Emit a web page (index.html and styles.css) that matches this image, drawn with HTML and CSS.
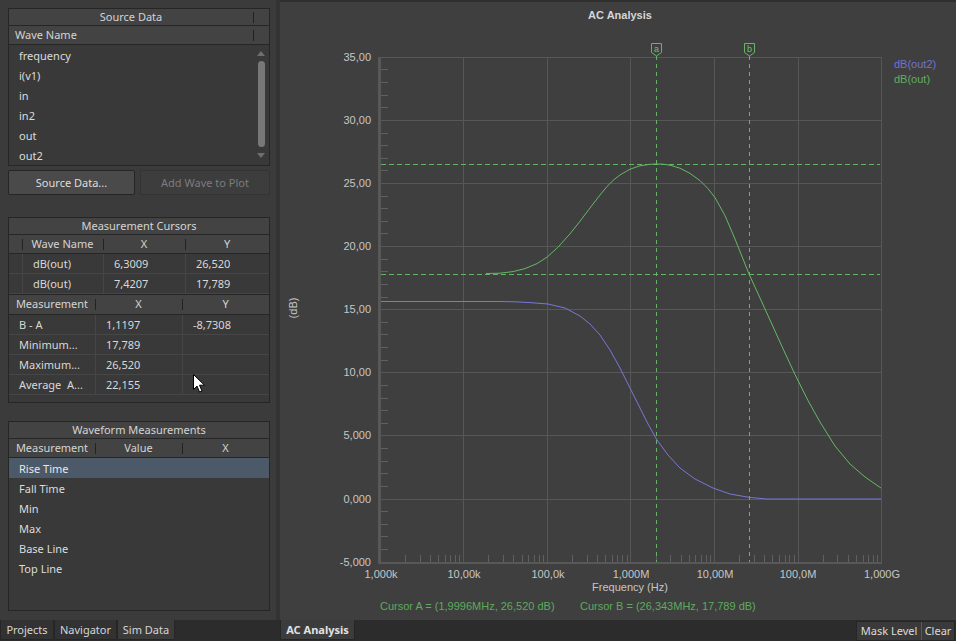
FILE: index.html
```html
<!DOCTYPE html>
<html>
<head>
<meta charset="utf-8">
<title>AC Analysis</title>
<link rel="stylesheet" href="styles.css">
</head>
<body>
<div class="app">
  <div class="main">
    <aside class="side">
      <section class="tbl src">
        <div class="hdr cols-src srctitle"><div class="hc">Source Data</div><div class="hc sep"></div></div>
        <div class="hdr cols-src"><div class="hc left">Wave Name</div><div class="hc sep"></div></div>
        <div class="src-body">
          <ul class="list">
            <li>frequency</li>
            <li>i(v1)</li>
            <li>in</li>
            <li>in2</li>
            <li>out</li>
            <li>out2</li>
          </ul>
          <div class="scroll">
            <span class="arr up"></span>
            <span class="thumb"></span>
            <span class="arr down"></span>
          </div>
        </div>
      </section>

      <div class="btns">
        <button class="btn b1">Source Data...</button>
        <button class="btn b2 dis">Add Wave to Plot</button>
      </div>

      <section class="tbl mc">
        <div class="ttl">Measurement Cursors</div>
        <div class="hdr cols-a"><div class="hc"></div><div class="hc sep">Wave Name</div><div class="hc sep">X</div><div class="hc sep">Y</div></div>
        <div class="row cols-a"><div class="c"></div><div class="c">dB(out)</div><div class="c">6,3009</div><div class="c">26,520</div></div>
        <div class="row cols-a"><div class="c"></div><div class="c">dB(out)</div><div class="c">7,4207</div><div class="c">17,789</div></div>
        <div class="hdr cols-b sec"><div class="hc">Measurement</div><div class="hc sep">X</div><div class="hc sep">Y</div></div>
        <div class="row cols-b"><div class="c">B - A</div><div class="c">1,1197</div><div class="c">-8,7308</div></div>
        <div class="row cols-b"><div class="c">Minimum...</div><div class="c">17,789</div><div class="c"></div></div>
        <div class="row cols-b"><div class="c">Maximum...</div><div class="c">26,520</div><div class="c"></div></div>
        <div class="row cols-b"><div class="c">Average&nbsp; A...</div><div class="c">22,155</div><div class="c"></div></div>
        <div class="fill mcfill"></div>
      </section>

      <section class="tbl wm">
        <div class="ttl">Waveform Measurements</div>
        <div class="hdr cols-b"><div class="hc">Measurement</div><div class="hc sep">Value</div><div class="hc sep">X</div></div>
        <div class="wrow sel">Rise Time</div>
        <div class="wrow">Fall Time</div>
        <div class="wrow">Min</div>
        <div class="wrow">Max</div>
        <div class="wrow">Base Line</div>
        <div class="wrow">Top Line</div>
      </section>

      <svg class="pointer" width="13" height="20" viewBox="0 0 13 20">
        <path d="M0.5 0.5 L0.5 15.5 L4 12 L6.5 18 L9 17 L6.5 11.2 L11.5 11.2 Z" fill="#ffffff" stroke="#000000" stroke-width="1" stroke-linejoin="miter"/>
      </svg>
    </aside>

    <div class="split"></div>

    <main class="chart">
      <svg class="plot" width="676" height="618" viewBox="280 2 676 618">
        <text class="title" x="620" y="19" text-anchor="middle">AC Analysis</text>

        <!-- grid -->
        <path class="grid" d="M380 57.5H881.5M380 120.5H881.5M380 183.5H881.5M380 246.5H881.5M380 309.5H881.5M380 372.5H881.5M380 435.5H881.5M380 499.5H881.5M463.5 57V562M547.5 57V562M630.5 57V562M714.5 57V562M798.5 57V562M881.5 57V562"/>

        <!-- minor y ticks -->
        <path class="tick" d="M381 69.5h7M381 82.5h7M381 95.5h7M381 107.5h7M381 133.5h7M381 145.5h7M381 158.5h7M381 170.5h7M381 196.5h7M381 208.5h7M381 221.5h7M381 233.5h7M381 259.5h7M381 271.5h7M381 284.5h7M381 297.5h7M381 322.5h7M381 334.5h7M381 347.5h7M381 360.5h7M381 385.5h7M381 398.5h7M381 410.5h7M381 423.5h7M381 448.5h7M381 461.5h7M381 473.5h7M381 486.5h7M381 511.5h7M381 524.5h7M381 536.5h7M381 549.5h7"/>

        <!-- minor x ticks -->
        <path class="tick" d="M405.5 555v7M420.5 555v7M430.5 555v7M438.5 555v7M445.5 555v7M450.5 555v7M455.5 555v7M459.5 555v7M488.5 555v7M503.5 555v7M513.5 555v7M522.5 555v7M528.5 555v7M534.5 555v7M539.5 555v7M543.5 555v7M572.5 555v7M587.5 555v7M597.5 555v7M605.5 555v7M612.5 555v7M617.5 555v7M622.5 555v7M627.5 555v7M656.5 555v7M670.5 555v7M681.5 555v7M689.5 555v7M695.5 555v7M701.5 555v7M706.5 555v7M710.5 555v7M739.5 555v7M754.5 555v7M764.5 555v7M772.5 555v7M779.5 555v7M785.5 555v7M789.5 555v7M794.5 555v7M823.5 555v7M837.5 555v7M848.5 555v7M856.5 555v7M863.5 555v7M868.5 555v7M873.5 555v7M877.5 555v7"/>

        <!-- axes -->
        <rect class="axis" x="378" y="57" width="3" height="507"/>
        <rect class="axis" x="378" y="562" width="504" height="2"/>

        <!-- y labels -->
        <g class="lbl" text-anchor="end">
          <text x="371" y="61">35,00</text>
          <text x="371" y="124">30,00</text>
          <text x="371" y="187">25,00</text>
          <text x="371" y="250">20,00</text>
          <text x="371" y="313">15,00</text>
          <text x="371" y="376">10,00</text>
          <text x="371" y="439">5,000</text>
          <text x="371" y="503">0,000</text>
          <text x="371" y="566">-5,000</text>
        </g>

        <!-- x labels -->
        <g class="lbl" text-anchor="middle">
          <text x="381" y="578">1,000k</text>
          <text x="464" y="578">10,00k</text>
          <text x="548" y="578">100,0k</text>
          <text x="631" y="578">1,000M</text>
          <text x="715" y="578">10,00M</text>
          <text x="798" y="578">100,0M</text>
          <text x="882" y="578">1,000G</text>
          <text x="630" y="591">Frequency (Hz)</text>
        </g>
        <text class="lbl" transform="translate(297,308) rotate(-90)" text-anchor="middle">(dB)</text>

        <!-- cursor lines -->
        <path class="cur hdash" d="M381 164.5H880M381 274.5H880"/>
        <path class="cur vdash" d="M656.5 56V562M749.5 56V562"/>

        <!-- curves -->
        <polyline class="wave out2" points="381,301.5 500,301.5 515,301.8 530,302.6 548,304 565,308 580,316 590,324 600,335 610,350 620,368 630,388 640,408 648,424 657,440 668,455 680,468 695,479 713,488 730,494 750,497.5 767,499 881,499"/>
        <polyline class="wave out" points="486,273.5 500,273.2 513,271.6 525,268.6 537,263.6 547,257.2 558,247.2 570,233.8 580,221.2 590,208 600,195 607,186.5 614,179.6 620,175 630,169.2 640,165.8 650,164.3 656,164 663,164.2 670,165.2 680,168.2 690,173.4 700,180.6 708,188.6 715,197.6 725,215.6 735,239 749,274 760,298 770,320 782,346.5 795,374.5 808,400.5 820,422 835,446 850,464 865,477 881,488"/>

        <!-- cursor flags -->
        <path class="flag" d="M651.5 43.5H661.5V52.5L656.5 56L651.5 52.5Z"/>
        <text class="flagtxt" x="656.5" y="51.5" text-anchor="middle">a</text>
        <path class="flag" d="M744.5 43.5H754.5V52.5L749.5 56L744.5 52.5Z"/>
        <text class="flagtxt" x="749.5" y="51.5" text-anchor="middle">b</text>

        <!-- legend -->
        <text class="leg l2" x="894" y="68">dB(out2)</text>
        <text class="leg l1" x="894" y="83">dB(out)</text>

        <!-- readouts -->
        <text class="readout" x="380" y="610">Cursor A = (1,9996MHz, 26,520 dB)</text>
        <text class="readout" x="580" y="610">Cursor B = (26,343MHz, 17,789 dB)</text>
      </svg>
    </main>
  </div>

  <div class="bottom">
    <div class="ltabs">
      <div class="tab t1">Projects</div>
      <div class="tab t2">Navigator</div>
      <div class="tab t3 active">Sim Data</div>
    </div>
    <div class="rtabs">
      <div class="tab actab">AC Analysis</div>
      <div class="tools">
        <div class="tool">Mask Level</div>
        <div class="tool clear">Clear</div>
      </div>
    </div>
  </div>
</div>
</body>
</html>
```

FILE: styles.css
```css
* {
  box-sizing: border-box;
}

html, body {
  margin: 0;
  padding: 0;
}

body {
  width: 956px;
  height: 641px;
  overflow: hidden;
  background: #2c2c2c;
  font-family: "Noto Sans", "DejaVu Sans", sans-serif;
  font-size: 11px;
  color: #d6d6d6;
}

.app {
  display: flex;
  flex-direction: column;
  height: 641px;
}

.main {
  display: flex;
  height: 620px;
}

/* ---------- left side panel ---------- */
.side {
  position: relative;
  width: 276px;
  background: #3b3b3b;
  padding: 8px 6px 0 8px;
  display: flex;
  flex-direction: column;
}

.split {
  width: 4px;
  background: #333333;
}

.tbl {
  width: 262px;
  border: 1px solid #262626;
  background: #393939;
}

.ttl {
  height: 17px;
  line-height: 16px;
  text-align: center;
  background: #434343;
  border-bottom: 1px solid #262626;
  color: #d4d4d4;
}

.hdr {
  display: grid;
  height: 19px;
  background: #434343;
  border-bottom: 1px solid #262626;
  color: #d4d4d4;
}

.hdr.srctitle {
  height: 17px;
}

.hdr.srctitle .hc {
  line-height: 16px;
}

.hc {
  line-height: 18px;
  text-align: center;
  white-space: nowrap;
  overflow: hidden;
}

.hc.left {
  text-align: left;
  padding-left: 6px;
}

.hc.sep {
  background: linear-gradient(#222222, #222222) 0 50% / 1px 11px no-repeat;
}

.cols-src {
  grid-template-columns: 244px 1fr;
}

.cols-a {
  grid-template-columns: 13px 81px 82px 1fr;
}

.cols-b {
  grid-template-columns: 86px 87px 1fr;
}

.hdr.sec {
  height: 21px;
  border-top: 1px solid #262626;
}

.row {
  display: grid;
  height: 20px;
  border-bottom: 1px solid #464646;
  color: #d8d8d8;
}

.c {
  line-height: 19px;
  padding-left: 10px;
  white-space: nowrap;
  overflow: hidden;
}

.c + .c {
  border-left: 1px solid #464646;
}

.fill.mcfill {
  height: 7px;
}

/* source list */
.src-body {
  display: flex;
  height: 120px;
}

.list {
  list-style: none;
  margin: 0;
  padding: 1px 0 0 0;
  flex: 1;
}

.list li {
  height: 20px;
  line-height: 20px;
  padding-left: 10px;
  color: #dcdcdc;
}

.scroll {
  width: 16px;
  display: flex;
  flex-direction: column;
  align-items: center;
  padding-top: 6px;
}

.arr {
  width: 0;
  height: 0;
  border-left: 4px solid transparent;
  border-right: 4px solid transparent;
}

.arr.up {
  border-bottom: 5px solid #6e6e6e;
}

.arr.down {
  margin-top: 6px;
  border-top: 5px solid #6e6e6e;
}

.thumb {
  margin-top: 5px;
  width: 7px;
  height: 86px;
  border-radius: 4px;
  background: #787878;
}

/* buttons */
.btns {
  display: flex;
  gap: 5px;
  margin-top: 4px;
}

.btn {
  height: 25px;
  padding: 0;
  font-family: inherit;
  font-size: 11px;
  color: #dedede;
  background: #4a4a4a;
  border: 1px solid #262626;
  border-radius: 2px;
}

.btn.b1 {
  width: 127px;
}

.btn.b2 {
  width: 130px;
}

.btn.dis {
  background: #3d3d3d;
  border-color: #343434;
  color: #7c7c7c;
}

.mc {
  margin-top: 22px;
}

.wm {
  margin-top: 18px;
  height: 190px;
}

.wrow {
  height: 20px;
  line-height: 21px;
  padding-left: 10px;
  color: #dcdcdc;
}

.wrow.sel {
  background: #4b5968;
  color: #e8e8e8;
}

.pointer {
  position: absolute;
  left: 193px;
  top: 374px;
}

/* ---------- chart ---------- */
.chart {
  flex: 1;
  background: #3f3f3f;
  border-top: 2px solid #2f2f2f;
}

.plot {
  display: block;
  font-family: "Liberation Sans", Arial, sans-serif;
  font-size: 11px;
}

.title {
  font-weight: bold;
  fill: #d6d6d6;
}

.grid {
  stroke: #575757;
  stroke-width: 1;
  fill: none;
}

.tick {
  stroke: #5f5f5f;
  stroke-width: 1;
  fill: none;
}

.axis {
  fill: #585858;
}

.lbl {
  fill: #c6c6c6;
}

.cur {
  fill: none;
  stroke: #63b663;
  stroke-width: 1;
}

.hdash {
  stroke-dasharray: 5 3;
}

.vdash {
  stroke-dasharray: 4 4;
}

.wave {
  fill: none;
  stroke-width: 1;
  stroke-linejoin: round;
}

.wave.out {
  stroke: #65b865;
}

.wave.out2 {
  stroke: #7878d8;
}

.flag {
  fill: #3f3f3f;
  stroke: #63b663;
  stroke-width: 1;
}

.flagtxt {
  font-size: 9px;
  fill: #6cc06c;
}

.leg {
  font-size: 11px;
}

.leg.l2 {
  fill: #7272d2;
}

.leg.l1 {
  fill: #5fae5f;
}

.readout {
  fill: #5dab5d;
}

/* ---------- bottom tab bars ---------- */
.bottom {
  display: flex;
  height: 21px;
  background: #2c2c2c;
}

.ltabs {
  width: 280px;
  display: flex;
}

.tab {
  height: 20px;
  line-height: 19px;
  text-align: center;
  background: #323232;
  border: 1px solid #262626;
  border-top: none;
  border-radius: 0 0 2px 2px;
  color: #d6d6d6;
  white-space: nowrap;
}

.tab.t1 {
  width: 54px;
}

.tab.t2 {
  width: 63px;
}

.tab.t3 {
  width: 58px;
}

.tab.active {
  background: #3b3b3b;
}

.rtabs {
  flex: 1;
  display: flex;
  justify-content: space-between;
}

.tab.actab {
  width: 75px;
  background: #3c3c3c;
  font-weight: bold;
  color: #e2e2e2;
}

.tools {
  display: flex;
  height: 20px;
  margin: 1px 1px 0 0;
  border: 1px solid #262626;
  background: #3a3a3a;
}

.tool {
  width: 64px;
  line-height: 18px;
  text-align: center;
  color: #dadada;
}

.tool.clear {
  width: 33px;
  border-left: 1px solid #5a5a5a;
}
```
